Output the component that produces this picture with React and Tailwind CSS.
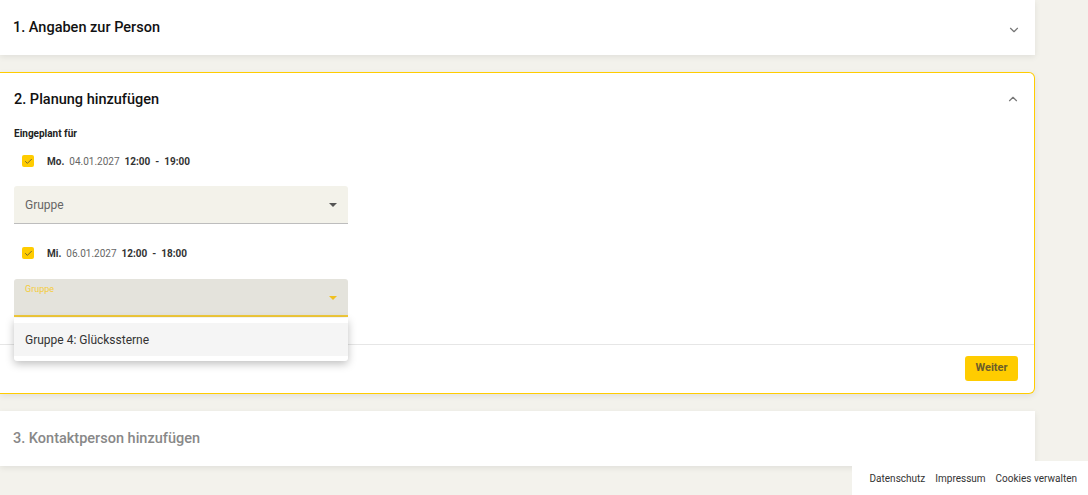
import React from 'react';
import { ChevronDown, ChevronUp, Check } from 'lucide-react';

const Checkbox = () => (
  <span className="w-[12px] h-[12px] rounded-[2px] bg-[#ffcc00] flex items-center justify-center">
    <Check className="w-[9px] h-[9px] text-[#6f6130]" strokeWidth={2.5} />
  </span>
);

const DayRow = ({ day, date, from, to }) => (
  <div className="flex items-center h-[24px] pl-[8px] text-[10px] text-[#333]">
    <Checkbox />
    <span className="ml-[13px] font-bold">{day}</span>
    <span className="ml-[5px] text-[#666]">{date}</span>
    <span className="ml-[5px] font-bold">{from}</span>
    <span className="mx-[5px] font-bold">-</span>
    <span className="font-bold">{to}</span>
  </div>
);

const Arrow = ({ color }) => (
  <span className={`block w-0 h-0 border-l-[4px] border-r-[4px] border-t-[4px] border-l-transparent border-r-transparent ${color}`} />
);

const App = () => {
  return (
    <div className="relative w-[1088px] h-[495px] overflow-hidden bg-[#f3f2ec]" style={{ fontFamily: 'Roboto, "Liberation Sans", sans-serif' }}>
      <div className="w-[1035px] flex flex-col">
        {/* Step 1 */}
        <div className="h-[55px] bg-white shadow-[0_2px_6px_rgba(0,0,0,0.08)] flex items-center justify-between pl-[13px] pr-[14px]">
          <h2 className="text-[14.5px] font-medium text-[#111]">1. Angaben zur Person</h2>
          <ChevronDown className="w-[14px] h-[14px] text-[#777] mt-[4px]" />
        </div>

        {/* Step 2 */}
        <div className="mt-[17px] bg-white border border-l-0 border-[#ffcc00] rounded-r-[6px] shadow-[0_2px_6px_rgba(0,0,0,0.08)]">
          <div className="h-[54px] flex items-center justify-between pl-[14px] pr-[14px]">
            <h2 className="text-[14.5px] font-medium text-[#111]">2. Planung hinzufügen</h2>
            <ChevronUp className="w-[14px] h-[14px] text-[#777] -mt-[3px]" />
          </div>
          <div className="px-[14px] pb-[27px]">
            <div className="text-[10px] leading-[14px] font-bold text-[#222]">Eingeplant für</div>
            <div className="mt-[8px]">
              <DayRow day="Mo." date="04.01.2027" from="12:00" to="19:00" />
            </div>
            <div className="mt-[13px] w-[334px] h-[38px] bg-[#f3f2ea] rounded-t-[3px] border-b border-[#bdbdbd] flex items-center justify-between pl-[11px] pr-[11px]">
              <span className="text-[12px] text-[#666]">Gruppe</span>
              <Arrow color="border-t-[#555]" />
            </div>
            <div className="mt-[17px]">
              <DayRow day="Mi." date="06.01.2027" from="12:00" to="18:00" />
            </div>
            <div className="relative mt-[14px] w-[334px]">
              <div className="h-[38px] bg-[#e4e3dc] rounded-t-[3px] border-b-2 border-[#f0c93a] flex justify-between pl-[11px] pr-[11px]">
                <span className="text-[9px] text-[#f5cc3a] mt-[4px]">Gruppe</span>
                <span className="mt-[17px]"><Arrow color="border-t-[#f0c020]" /></span>
              </div>
              <div className="absolute left-0 top-[39px] w-[334px] z-10 bg-white py-[5px] shadow-[0_3px_8px_rgba(0,0,0,0.25)] rounded-b-[3px]">
                <div className="h-[33px] bg-[#f5f5f5] flex items-center pl-[11px] text-[12px] text-[#333]">
                  Gruppe 4: Glückssterne
                </div>
              </div>
            </div>
          </div>
          <div className="border-t border-[#e6e6e6] flex justify-end pt-[11px] pb-[12px] pr-[16px]">
            <button className="h-[25px] w-[53px] bg-[#ffcc00] rounded-[3px] text-[11px] font-bold text-[#6b5d2a]">
              Weiter
            </button>
          </div>
        </div>

        {/* Step 3 */}
        <div className="mt-[17px] h-[55px] bg-white shadow-[0_2px_6px_rgba(0,0,0,0.08)] flex items-center pl-[13px]">
          <h2 className="text-[14.5px] font-medium text-[#888]">3. Kontaktperson hinzufügen</h2>
        </div>
      </div>

      {/* Footer links */}
      <div className="absolute right-0 bottom-0 w-[236px] h-[34px] bg-white flex items-center justify-end gap-[10px] pr-[11px] text-[10px] text-[#333] whitespace-nowrap">
        <span>Datenschutz</span>
        <span>Impressum</span>
        <span>Cookies verwalten</span>
      </div>
    </div>
  );
};

export default App;
